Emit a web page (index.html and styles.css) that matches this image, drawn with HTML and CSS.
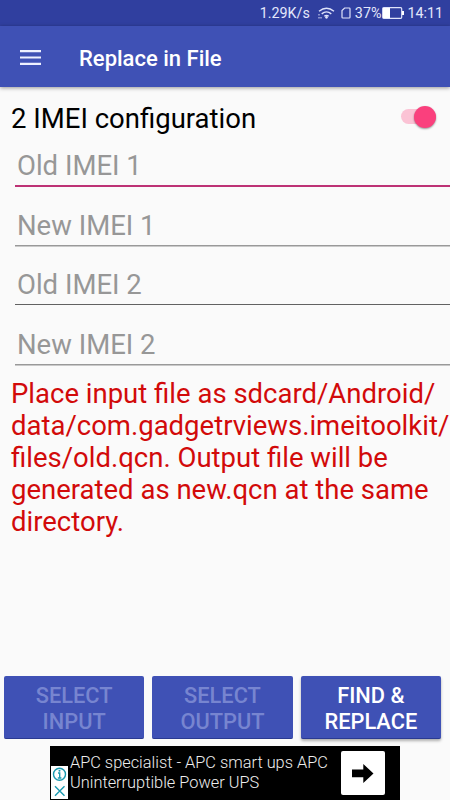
FILE: index.html
```html
<!DOCTYPE html>
<html lang="en">
<head>
<meta charset="utf-8">
<title>Replace in File</title>
<link rel="stylesheet" href="styles.css">
</head>
<body>
<div class="screen">
  <div class="status">
    <span class="speed">1.29K/s</span>
    <svg class="wifi" width="17" height="12" viewBox="0 0 17 12" fill="none" stroke="#dfe3fa" stroke-width="1.4"><path d="M1 4.3Q8.5-2 16 4.3M3.7 6.9Q8.500 2.900 13.300 6.900M6.300 9.200Q8.500 7.500 10.700 9.200"/><circle cx="8.500" cy="10.300" r=".7" fill="#dfe3fa"/><path d="M1 7v1.500M1 10v1.500M3 10v1.500" stroke-width="1"/></svg>
    <svg class="sim" width="10" height="12" viewBox="0 0 10 12" fill="none" stroke="#dfe3fa" stroke-width="1.200"><path d="M3.600 1H8.200Q9 1 9 1.800V10.200Q9 11 8.200 11H1.800Q1 11 1 10.200V3.600Z"/></svg>
    <span class="percent">37%</span>
    <svg class="battery" width="22" height="12" viewBox="0 0 22 12"><rect x=".7" y=".7" width="19" height="10.600" rx="1" fill="none" stroke="#dfe3fa" stroke-width="1.200"/><path d="M1 1h7v10H1zM20 4h2v4h-2z" fill="#fff"/></svg>
    <span class="clock">14:11</span>
  </div>
  <header class="appbar">
    <svg class="menu" width="21" height="16" viewBox="0 0 21 16" fill="#edf0ff"><path d="M0 0h21v2.200H0zM0 6.400h21v2.200H0zM0 12.800h21V15H0z"/></svg>
    <h1>Replace in File</h1>
  </header>
  <main>
    <div class="option"><span>2 IMEI configuration</span><span class="switch"><span class="thumb"></span></span></div>
    <div class="fields">
      <div class="field focused">Old IMEI 1</div>
      <div class="field">New IMEI 1</div>
      <div class="field dark">Old IMEI 2</div>
      <div class="field">New IMEI 2</div>
    </div>
    <p class="note">Place input file as sdcard/Android/<br>data/com.gadgetrviews.imeitoolkit/<br>files/old.qcn. Output file will be<br>generated as new.qcn at the same<br>directory.</p>
  </main>
  <div class="actions">
    <div class="button disabled">SELECT<br>INPUT</div>
    <div class="button disabled">SELECT<br>OUTPUT</div>
    <div class="button enabled">FIND &amp;<br>REPLACE</div>
  </div>
  <div class="ad">
    <svg class="choices" width="17" height="33" viewBox="0 0 17 33"><path d="M0 0h17v33H0z" fill="#fff"/><g fill="none" stroke="#1a9ab0" stroke-width="1.400"><circle cx="8.500" cy="8.300" r="6"/><path d="M7 7h1.700v5M6.800 12h3.600M4 20.300l9.500 9.500M13.500 20.300L4 29.800"/></g><circle cx="8.500" cy="4.700" r="1" fill="#1a9ab0"/></svg>
    <div class="adtext">APC specialist - APC smart ups APC<br>Uninterruptible Power UPS</div>
    <div class="go"><svg width="22" height="19" viewBox="0 0 22 19"><path d="M0 5.500h11.300V0L21.500 9.500 11.300 19V13.300H0z" fill="#000"/></svg></div>
  </div>
</div>
</body>
</html>
```
FILE: styles.css
```css
* { box-sizing: border-box; }
body { margin: 0; font-family: Roboto, "Liberation Sans", sans-serif; }
.screen { width: 450px; height: 800px; overflow: hidden; background: #fafafa; display: flex; flex-direction: column; }
.status { height: 26px; flex: none; background: #303f9f; color: #e3e7fb; display: flex; align-items: center; justify-content: flex-end; padding-right: 7px; font-size: 14.3px; line-height: 26px; white-space: nowrap; }
.wifi { margin-left: 8px; }
.sim { margin-left: 6px; }
.percent { margin-left: 4px; }
.battery { margin-left: 1px; }
.clock { margin-left: 3px; }
.appbar { height: 61px; flex: none; background: #3f51b5; display: flex; align-items: center; padding: 1px 0 0 20px; box-shadow: 0 1px 4px rgba(0, 0, 0, .4); }
.menu { margin-top: 1px; }
h1 { margin: 3px 0 0 38px; font-size: 22px; line-height: 26px; font-weight: 500; color: #fff; white-space: nowrap; }
main { flex: 1; padding-top: 15px; font-size: 27.500px; line-height: 32px; white-space: nowrap; }
.option { height: 32px; display: flex; justify-content: space-between; padding: 0 14px 0 11px; color: #000; }
.option > span:first-child { padding-top: 1px; }
.switch { width: 35px; height: 15px; margin-top: 7px; border-radius: 8px; background: #fbc3d5; display: flex; justify-content: flex-end; align-items: center; }
.thumb { width: 22px; height: 22px; flex: none; border-radius: 50%; background: #fa407d; box-shadow: 0 1px 2px rgba(0, 0, 0, .4); }
.fields { margin: 16px 0 0 15px; }
.field { height: 59.5px; padding-left: 2px; color: #979797; background: linear-gradient(#999, #999) 0 35px / 100% 1.500px no-repeat; }
.field.focused { background: linear-gradient(#bd3275, #bd3275) 0 35px / 100% 2px no-repeat; }
.field.dark { background: linear-gradient(#626262, #626262) 0 35px / 100% 1px no-repeat; }
.note { margin: -10px 0 0 11px; color: #d20a0a; }
.actions { flex: none; height: 64px; display: flex; gap: 8px; padding: 0 9px 0 4px; margin-bottom: 6px; }
.button { flex: 1; height: 63px; padding-top: 7px; border-radius: 2px; background: #3f51b5; border-bottom: 1px solid #2a3a91; text-align: center; font-size: 21.800px; line-height: 26px; font-weight: 500; color: #fff; }
.disabled { color: #7785d0; }
.enabled { box-shadow: 0 2px 3px rgba(0, 0, 0, .3); }
.ad { flex: none; width: 350px; height: 54px; margin-left: 50px; background: #000; display: flex; }
.choices { flex: none; margin: 20px 0 0 1px; }
.adtext { margin: 7px 0 0 2px; width: 271px; font-size: 16.350px; line-height: 19.500px; font-weight: 300; color: #eee; white-space: nowrap; }
.go { width: 44px; height: 44px; margin-top: 5px; background: #fff; border-radius: 2px; display: flex; align-items: center; justify-content: center; }
```
